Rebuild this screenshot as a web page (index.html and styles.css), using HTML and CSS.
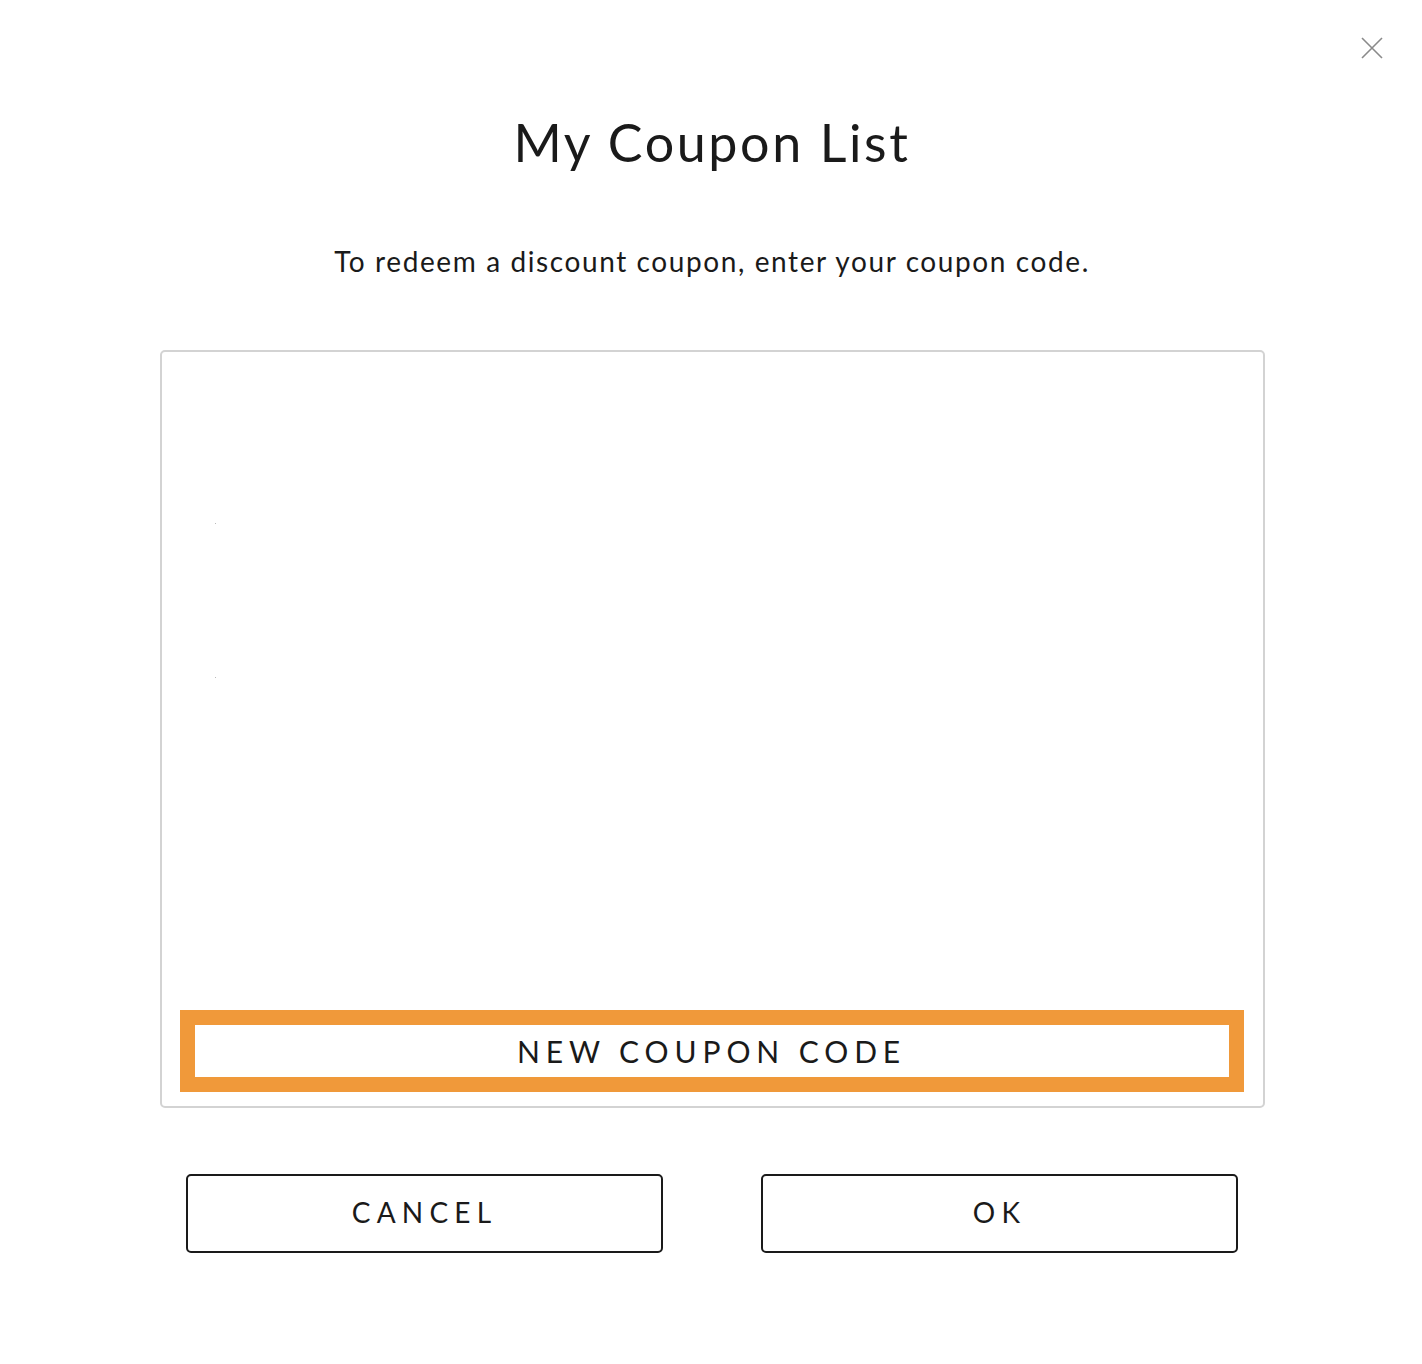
FILE: index.html
```html
<!DOCTYPE html>
<html>
<head>
  <title>My Coupon List</title>
  <link rel="stylesheet" href="styles.css">
</head>
<body>
  <div class="dialog">
    <button class="close" aria-label="Close">
      <svg width="22" height="22" viewBox="0 0 22 22"><path d="M1 1L21 21M21 1L1 21" stroke="#8a8a8a" stroke-width="1.6" fill="none"/></svg>
    </button>
    <h1 class="title">My Coupon List</h1>
    <p class="intro">To redeem a discount coupon, enter your coupon code.</p>
    <div class="coupon-box">
      <div class="coupon-list">
        <span class="dot"></span>
        <span class="dot second"></span>
      </div>
      <button class="new-code">NEW COUPON CODE</button>
    </div>
    <div class="actions">
      <button class="btn">CANCEL</button>
      <button class="btn">OK</button>
    </div>
  </div>
</body>
</html>
```

FILE: styles.css
```css
body { margin: 0; background: #fff; font-family: Lato, "Noto Sans", sans-serif; color: #1a1a1a; }
.dialog { position: relative; width: 1422px; min-height: 1364px; box-sizing: border-box; padding-left: 2px; display: flex; flex-direction: column; align-items: center; }
.close { position: absolute; top: 37px; right: 39px; background: none; border: 0; padding: 0; cursor: pointer; }
.title { margin: 109px 0 0; font-size: 52px; font-weight: 400; letter-spacing: 2.6px; line-height: 66px; }
.intro { margin: 69px 0 0; font-size: 28px; line-height: 34px; letter-spacing: 1.6px; }
.coupon-box { margin-top: 72px; width: 1105px; height: 758px; box-sizing: border-box; border: 2px solid #d3d3d3; border-radius: 5px; padding: 0 19px 14px 18px; display: flex; flex-direction: column; }
.coupon-list { flex: 1; position: relative; }
.dot { position: absolute; left: 35px; top: 171px; width: 1px; height: 1px; background: #bbb; }
.dot.second { top: 325px; }
.new-code { height: 82px; box-sizing: border-box; border: 15px solid #f0993a; background: #fff; font-family: inherit; font-size: 30px; letter-spacing: 5.9px; color: #1a1a1a; padding: 0; }
.actions { margin-top: 66px; display: flex; gap: 98px; }
.btn { width: 477px; height: 79px; box-sizing: border-box; border: 2px solid #1a1a1a; border-radius: 5px; background: #fff; font-family: inherit; font-size: 28px; letter-spacing: 6.2px; color: #1a1a1a; padding: 0 0 3px; }
```
